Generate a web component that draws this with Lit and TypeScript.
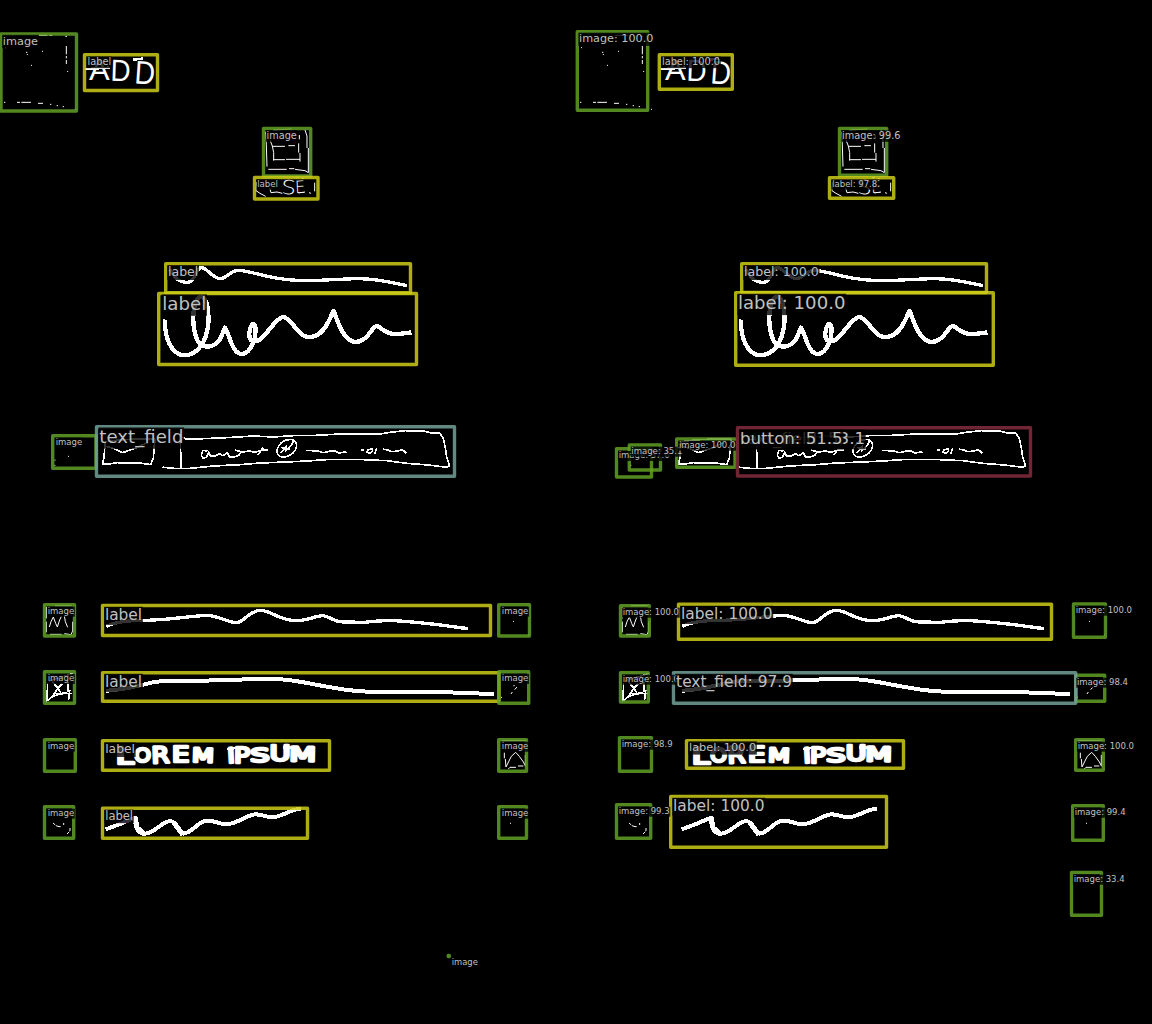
import { LitElement, html, svg, css } from "lit";
import { customElement, property } from "lit/decorators.js";

type Kind = "image" | "label" | "field" | "button";
// kind, left, top, right, bottom, caption, caption x, baseline, font size
type Detection = [Kind, number, number, number, number, string, number, number, number];

const TRUTH: Detection[] = [
  ["image", 1, 34, 76.5, 111, "image", 3.3, 44.5, 11.3],
  ["label", 84.5, 54.7, 157.5, 90.5, "label", 88, 65, 9.8],
  ["image", 263.5, 128.5, 310.7, 176, "image", 267, 138.7, 9.7],
  ["label", 254.5, 177.5, 318, 199, "label", 257.5, 187, 8.6],
  ["label", 165.7, 263.7, 410.5, 292.7, "label", 168.5, 276, 12.5],
  ["label", 158.7, 293.5, 416.5, 364.5, "label", 163, 310, 18.2],
  ["image", 52.7, 435.7, 96, 468.3, "image", 56, 445, 8.5],
  ["field", 96.5, 426.7, 454.5, 476.3, "text_field", 100, 443, 18.1],
  ["label", 102.5, 605.5, 490.5, 635.5, "label", 105.5, 620, 15.4],
  ["label", 102.5, 672.7, 499, 701.3, "label", 105.5, 687, 15.4],
  ["label", 102.5, 740.7, 329.5, 770.3, "label", 105.7, 753, 12.3],
  ["label", 102.5, 808.3, 307.5, 838.3, "label", 105.7, 819.5, 11.5],
  ["image", 44.5, 604.7, 74.5, 636, "image", 48, 614, 8.5],
  ["image", 44.5, 671.7, 74.5, 703.3, "image", 48, 681.3, 8.5],
  ["image", 44.5, 739.7, 75.3, 771.3, "image", 48, 749, 8.5],
  ["image", 44.5, 806.7, 73.7, 838.3, "image", 48, 816, 8.5],
  ["image", 498.7, 604.7, 529.5, 636, "image", 502.2, 614, 8.5],
  ["image", 498.7, 671.7, 528.7, 703.3, "image", 502.2, 681.3, 8.5],
  ["image", 498.7, 739.7, 526.5, 771.3, "image", 502.2, 749, 8.5],
  ["image", 498.7, 806.7, 526.5, 838.3, "image", 502.2, 816, 8.5],
  ["image", 448.3, 955.5, 449.3, 956.5, "image", 452, 965, 8.4],
];

const PREDICTED: Detection[] = [
  ["image", 1.3, 31.7, 71.7, 110.3, "image: 100.0", 3.5, 42.3, 11.2],
  ["label", 83.3, 54.7, 156.3, 89.3, "label: 100.0", 86.3, 65, 9.8],
  ["image", 263.5, 128.5, 310.7, 175.3, "image: 99.6", 266.5, 138.7, 9.75],
  ["label", 253.5, 177.7, 317.7, 198.3, "label: 97.8", 256.5, 187, 8.5],
  ["label", 165.7, 263.7, 410.5, 292.5, "label: 100.0", 168.5, 276, 12.6],
  ["label", 159.7, 292.7, 417.3, 365.3, "label: 100.0", 162.7, 309.3, 18.1],
  ["image", 40.5, 448.7, 75.5, 477, "image: 37.6", 43, 458.3, 8.5],
  ["image", 53.3, 445, 84.5, 470, "image: 35.1", 55.7, 454, 8.5],
  ["image", 100.7, 439, 159, 467.3, "image: 100.0", 103.3, 448, 8.5],
  ["field", 161.5, 427.7, 454.5, 476, "text_field: 53.1", 164.7, 444, 16.6],
  ["button", 161.5, 427.7, 454.5, 476, "button: 51.5", 164.7, 444, 16.6],
  ["image", 44.5, 605.7, 73.3, 636, "image: 100.0", 47, 615, 8.5],
  ["image", 44.5, 672.7, 72.3, 702, "image: 100.0", 47, 682, 8.5],
  ["image", 43.5, 737.7, 75.5, 771.3, "image: 98.9", 46, 747, 8.5],
  ["image", 40.5, 804.7, 74.7, 838.3, "image: 99.3", 43, 814, 8.5],
  ["image", 497.5, 604, 529.5, 637.3, "image: 100.0", 500, 613, 8.5],
  ["image", 500, 675.3, 528.7, 701.3, "image: 98.4", 501.3, 685, 8.5],
  ["image", 499.7, 739.7, 527.3, 770.3, "image: 100.0", 502, 749, 8.5],
  ["image", 496.7, 805.7, 527.3, 840.3, "image: 99.4", 499, 815, 8.5],
  ["image", 495.5, 872.5, 525.5, 915.3, "image: 33.4", 498, 882, 8.5],
  ["label", 102.5, 604.3, 475.5, 639.3, "label: 100.0", 105.7, 619, 15.4],
  ["field", 97.5, 672.7, 499.7, 703.3, "text_field: 97.9", 100.7, 687, 15.4],
  ["label", 110.5, 740.7, 327.5, 768.3, "label: 100.0", 113.5, 751, 11.3],
  ["label", 94.7, 796.5, 310.5, 847.3, "label: 100.0", 97.7, 811, 15.4],
];

// Advance widths of DejaVu Sans, in em, used to size the plate behind a caption.
const ADVANCE: Record<string, number> = {
  a: 0.613, b: 0.635, d: 0.635, e: 0.615, f: 0.352, g: 0.635, i: 0.278, l: 0.278,
  m: 0.974, n: 0.634, o: 0.612, t: 0.392, u: 0.634, x: 0.592, _: 0.5, ":": 0.337, " ": 0.318, ".": 0.318,
};
const measure = (s: string, size: number) => [...s].reduce((w, c) => w + (ADVANCE[c] ?? 0.636), 0) * size;

// glyph, x, baseline, width, size, tilt in degrees
type Letter = [string, number, number, number, number, number?];
const letters = (list: Letter[]) =>
  list.map(
    ([c, x, y, w, s, tilt = 0]) =>
      svg`<text x=${x} y=${y} font-size=${s} textLength=${w} lengthAdjust="spacingAndGlyphs" transform=${`rotate(${tilt} ${x} ${y})`}>${c}</text>`,
  );

const SKETCH = svg`
  <g class="ink" transform="translate(0 20) scale(.33333)">
    <g class="pen">${letters([["A", 267, 179, 62, 88], ["D", 331, 182, 60, 92, 2], ["D", 402, 190, 61, 98, 4]])}</g>
    <path class="w8" d="M260 147L280 146L325 143M402 119L425 116"/>
    <path class="w3" d="M117 46H142M148 46H157M196 49H201M199 78V103M199 108V115M199 120V132M203 153V156M78 97H82M82 102V105M126 94H129M93 136H96M15 83H18M12 247H16M51 247H60M64 247H93M114 250H129M150 253H154M170 257H174M188 260H192M225 268H228M38 44H40"/>
  </g>
  <g class="ink w3" transform="translate(245 120) scale(.33333)">
    <path d="M62 35L64 75L66 140M85 30L140 27M180 30L186 48V84M190 84V158L180 152L150 148M70 148H125M132 146H148M75 60L82 78L86 98V122M82 79H120M130 77H150M84 119H120M123 118H165M163 45V58M161 70V98M165 99V125"/>
    <path d="M35 186L33 212L45 220L62 229M74 204L78 218L96 216L112 220M160 219L180 216M192 218L198 220M209 188V214M152 174L162 172M170 176L178 174"/>
    <g class="thin">${letters([["S", 108, 221, 44, 58, 3], ["E", 151, 219, 31, 50, -3]])}</g>
  </g>
  <g class="ink" transform="translate(150 255) scale(.33333)">
    <path class="w9" d="M62 48C78 72 90 84 115 82C136 78 138 42 152 38C172 36 185 70 212 71C235 68 240 46 265 46C310 48 350 72 440 76C500 79 560 72 620 71C680 70 720 82 766 91"/>
    <path class="w12" d="M45 200C44 250 65 299 103 301C145 300 170 258 175 205C178 160 168 128 155 124C132 130 126 180 132 220C138 260 150 275 175 275C210 270 215 240 225 218C240 240 245 295 275 297C305 295 320 245 316 215C312 198 300 210 298 235C297 255 305 262 322 258C350 245 375 190 398 186C425 186 445 250 478 246C525 245 540 185 551 168C560 190 580 262 618 261C655 258 665 215 681 212C700 225 715 240 745 237L778 233"/>
  </g>
  <g class="ink w5" transform="translate(40 415) scale(.33333)">
    <path d="M429 68L438 72L490 71L560 68L640 63L700 66L760 62L830 61L900 57L1020 57L1050 52L1095 47L1150 48L1175 54L1200 55L1210 70L1217 105L1220 125L1228 152L1222 157L1165 150L1100 145L1040 137L970 134L860 134L800 138L740 141L660 144L600 149L520 153L440 161L400 160L370 157"/>
    <path d="M421 60V85L424 157M196 82L192 125L188 147L200 148L230 143L300 144L332 149L340 130L343 90L345 76M198 80Q260 70 345 73M198 94L215 98L248 113L285 100L320 84"/>
    <path d="M500 108L488 106L484 122L490 130L500 126L506 112L512 124L525 124L538 116L548 122L562 114L568 125L580 126L595 122L604 112M588 106L606 111L630 108L645 112L660 107L683 104M655 118L668 100"/>
    <path d="M746 74C720 76 706 104 713 118C722 132 752 126 764 108C778 88 764 70 746 74M724 112L740 94L736 108L756 88L760 80M726 98L748 102"/>
    <path d="M802 106L832 108L850 113L868 109L882 107L896 114L917 111M967 105H971M996 102L984 104L980 112L990 114L998 108M1009 103L1005 114M1031 103L1046 105L1054 110L1076 108L1086 103L1097 113"/>
    <path class="w3" d="M45 134V137M84 124H87M43 151H46"/>
  </g>
  <g class="ink" transform="translate(35 595) scale(.33333)">
    <path class="w9" d="M218 92C240 82 280 76 330 76C400 75 450 65 515 61C550 62 580 83 605 83C630 80 640 48 675 46C710 46 730 77 785 77C820 77 840 62 865 62C890 66 892 80 925 81L990 82C1030 76 1060 77 1080 77C1120 80 1150 82 1180 86C1220 89 1260 97 1293 100"/>
    <path class="w11" d="M218 287C260 285 290 277 330 268C360 257 400 256 450 257L600 256C640 250 700 250 740 253C800 258 850 272 900 279C945 288 980 290 1030 291L1240 292L1371 297"/>
    <g class="bold">${letters([["L", 242, 508, 54, 70], ["O", 298, 502, 50, 60], ["R", 350, 505, 54, 68, -2], ["E", 411, 502, 52, 62], ["M", 470, 500, 66, 58, 2], ["I", 578, 504, 22, 62, -3], ["P", 597, 504, 48, 66], ["S", 646, 501, 58, 60], ["U", 704, 499, 62, 62], ["M", 763, 498, 80, 60, 1]])}</g>
    <path class="w8" d="M580 462L612 458M650 492L662 497M748 458H778"/>
    <path class="w11" d="M218 701L255 687L300 668C300 690 305 716 330 716C365 712 375 682 405 678C430 680 430 715 445 716C470 715 490 678 515 677C540 676 560 690 575 688C610 685 635 660 660 658C680 657 695 668 715 667C745 662 765 645 792 642"/>
    <path class="w15" d="M301 672L306 698L325 714M420 688L440 714"/>
    <path class="w3" d="M43 96L48 80L55 66L62 85L67 96L74 75L79 64M88 62L91 80L98 97M45 118H80M88 116L108 119L113 108V80M34 36V70M34 80V112M60 32H110"/>
    <path class="w5" d="M38 268L35 318L54 304L85 294L107 296M53 262L66 276L80 298M80 268L68 280L54 304M57 296H90M100 264V288M104 288L101 314M45 257L112 236"/>
    <path class="w3" d="M54 684L61 690M63 692L72 695H77M86 684V690M105 699V708M103 710L96 717"/>
  </g>
  <g class="ink w3" transform="translate(290 595) scale(.33333)">
    <path d="M669 79H672M714 120H717M672 270V274M681 276L674 284M667 291L663 297M633 307H636M660 685H663"/>
    <path d="M636 437H708M643 473V490M646 492L648 516L657 498L664 484L677 472L688 484L700 501L706 512M655 522L660 517H678M684 513H700M706 480V514"/>
  </g>`;

@customElement("sketch-panel")
export class SketchPanel extends LitElement {
  @property({ attribute: false }) detections: Detection[] = [];

  static styles = css`
    :host { display: block; width: 576px; height: 1024px; }
    .canvas { display: block; overflow: visible; }
    .ink { stroke: #fff; fill: none; stroke-linecap: square; stroke-linejoin: round; shape-rendering: crispEdges; }
    .ink text { fill: #fff; }
    .pen { font-family: "Liberation Sans", sans-serif; stroke: none; }
    .thin { font-family: "DejaVu Sans", "Liberation Sans", sans-serif; font-weight: 200; stroke: none; }
    .bold { font-family: "DejaVu Sans", sans-serif; stroke-width: 8; }
    .w3 { stroke-width: 3; stroke-linecap: butt; }
    .w5 { stroke-width: 5; }
    .w8 { stroke-width: 7.5; }
    .w9 { stroke-width: 10; }
    .w11 { stroke-width: 12; }
    .w12 { stroke-width: 13; }
    .w15 { stroke-width: 15; }
    .box { fill: none; stroke-width: 3.4; stroke-linejoin: round; opacity: 0.85; }
    .image { stroke: #60a025; }
    .label { stroke: #cccc18; }
    .field { stroke: #72a198; }
    .button { stroke: #762838; opacity: 0.96; }
    .plate { fill: #000; opacity: 0.8; }
    .caption { fill: #c0c0c0; font-family: "DejaVu Sans", sans-serif; }
  `;

  render() {
    return html`<svg class="canvas" width="576" height="1024" viewBox="0 0 576 1024">
      ${SKETCH}
      ${this.detections
        .filter(([kind], i, all) => !(kind === "field" && all[i + 1]?.[0] === "button"))
        .map(
          ([kind, l, t, r, b]) => svg`<rect class="box ${kind}" x=${l} y=${t} width=${r - l} height=${b - t}></rect>`,
        )}
      ${this.detections.map(([, , , , , text, x, y, size]) => {
        const w = measure(text, size);
        const left = x - size * 0.04;
        return svg`<rect class="plate" x=${left - 0.7} y=${y - size * 0.86} width=${w + 1.4} height=${size * 1.18}></rect>
          <text class="caption" x=${left} y=${y} font-size=${size} textLength=${w}>${text}</text>`;
      })}
    </svg>`;
  }
}

@customElement("app-root")
export class AppRoot extends LitElement {
  static styles = css`
    :host { display: block; background: #000; }
    .panels { display: flex; width: 1152px; height: 1024px; overflow: hidden; background: #000; }
  `;

  render() {
    return html`<main class="panels">
      <sketch-panel .detections=${TRUTH}></sketch-panel>
      <sketch-panel .detections=${PREDICTED}></sketch-panel>
    </main>`;
  }
}
